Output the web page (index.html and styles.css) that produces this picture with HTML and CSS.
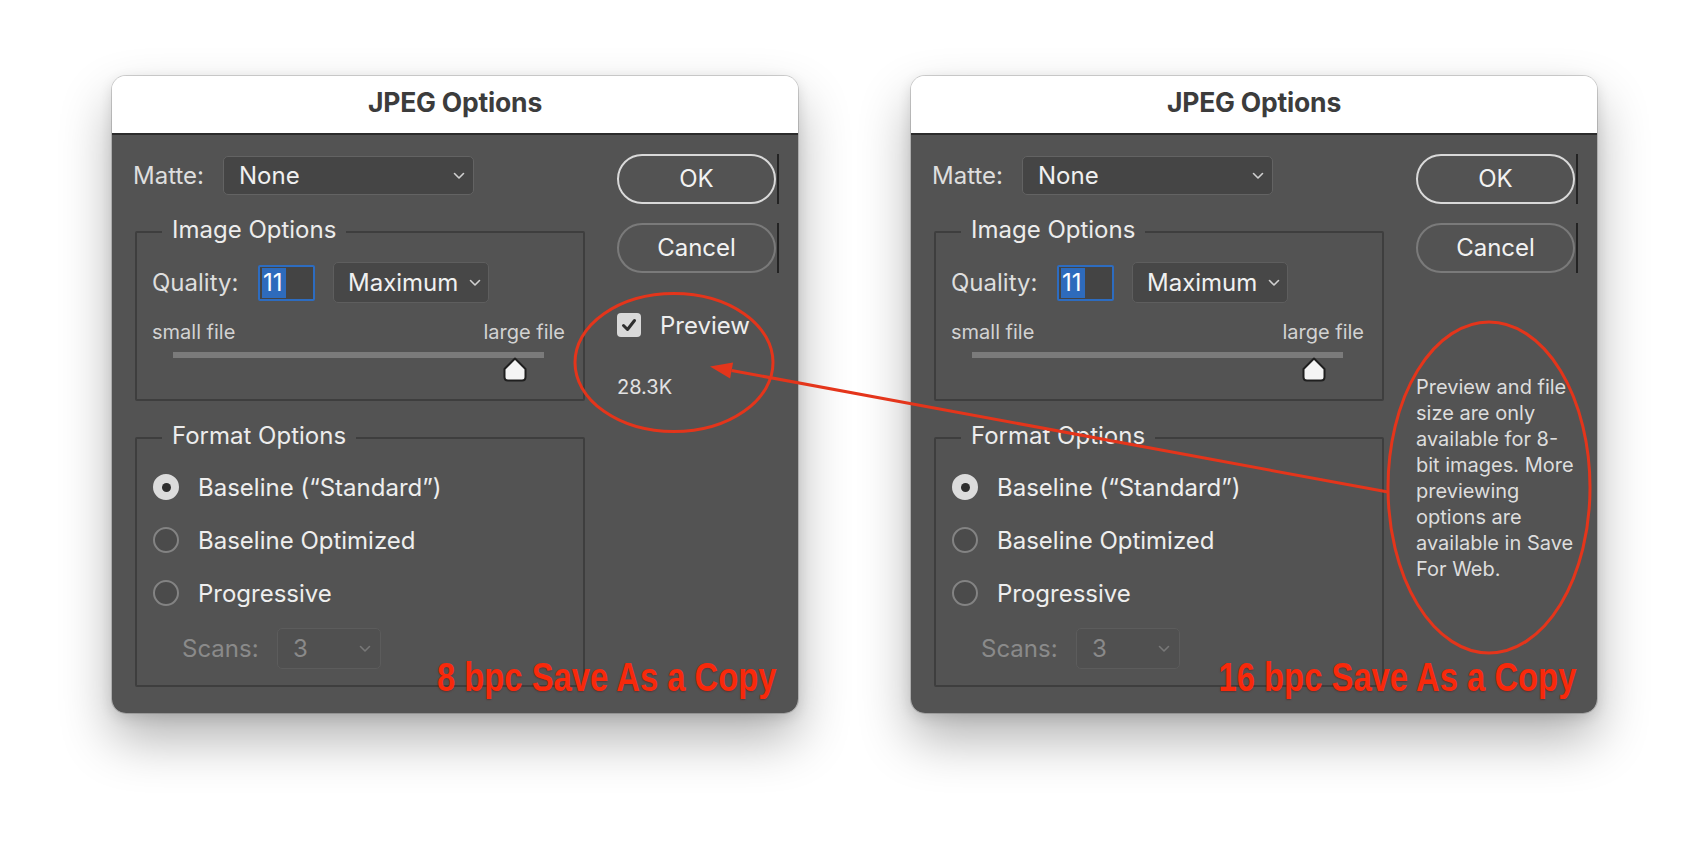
FILE: index.html
```html
<!DOCTYPE html>
<html lang="en">
<head>
<meta charset="utf-8">
<title>JPEG Options</title>
<link rel="stylesheet" href="styles.css">
</head>
<body>
<div class="stage">
  <div class="dialog">
    <div class="titlebar">JPEG Options</div>
    <div class="body">
      <div class="left">
        <div class="matte-row">
          <span class="label matte-label">Matte:</span>
          <div class="select matte-select"><span>None</span>
            <svg class="chev" width="12" height="8" viewBox="0 0 12 8"><polyline points="1.5,1.5 6,6 10.5,1.5"/></svg>
          </div>
        </div>
        <div class="group image-group">
          <div class="legend">Image Options</div>
          <div class="quality-row">
            <span class="label quality-label">Quality:</span>
            <div class="num-input"><span class="sel">11</span></div>
            <div class="select max-select"><span>Maximum</span>
              <svg class="chev" width="12" height="8" viewBox="0 0 12 8"><polyline points="1.5,1.5 6,6 10.5,1.5"/></svg>
            </div>
          </div>
          <div class="file-row"><span>small file</span><span>large file</span></div>
          <div class="slider">
            <div class="track"></div>
            <svg class="thumb" width="24" height="25" viewBox="0 0 24 25"><path d="M12 1.5 L22.5 12 L22.5 20 Q22.5 23.5 19 23.5 L5 23.5 Q1.5 23.5 1.5 20 L1.5 12 Z"/></svg>
          </div>
        </div>
        <div class="group format-group">
          <div class="legend">Format Options</div>
          <div class="radio-row first"><span class="radio on"></span><span class="rlabel">Baseline (“Standard”)</span></div>
          <div class="radio-row"><span class="radio"></span><span class="rlabel">Baseline Optimized</span></div>
          <div class="radio-row"><span class="radio"></span><span class="rlabel">Progressive</span></div>
          <div class="scans-row">
            <span class="label scans-label">Scans:</span>
            <div class="select scans-select"><span>3</span>
              <svg class="chev" width="12" height="8" viewBox="0 0 12 8"><polyline points="1.5,1.5 6,6 10.5,1.5"/></svg>
            </div>
          </div>
        </div>
      </div>
      <div class="right">
        <div class="btn-wrap"><div class="btn ok">OK</div></div>
        <div class="btn-wrap cancel-wrap"><div class="btn cancel">Cancel</div></div>
        <div class="preview-row">
          <span class="checkbox"><svg width="24" height="24" viewBox="0 0 24 24"><polyline points="6.5,12.5 10.5,16.5 17.5,7.5"/></svg></span>
          <span class="preview-label">Preview</span>
        </div>
        <div class="filesize">28.3K</div>
      </div>
      <div class="note">8 bpc Save As a Copy</div>
    </div>
  </div>

  <div class="dialog">
    <div class="titlebar">JPEG Options</div>
    <div class="body">
      <div class="left">
        <div class="matte-row">
          <span class="label matte-label">Matte:</span>
          <div class="select matte-select"><span>None</span>
            <svg class="chev" width="12" height="8" viewBox="0 0 12 8"><polyline points="1.5,1.5 6,6 10.5,1.5"/></svg>
          </div>
        </div>
        <div class="group image-group">
          <div class="legend">Image Options</div>
          <div class="quality-row">
            <span class="label quality-label">Quality:</span>
            <div class="num-input"><span class="sel">11</span></div>
            <div class="select max-select"><span>Maximum</span>
              <svg class="chev" width="12" height="8" viewBox="0 0 12 8"><polyline points="1.5,1.5 6,6 10.5,1.5"/></svg>
            </div>
          </div>
          <div class="file-row"><span>small file</span><span>large file</span></div>
          <div class="slider">
            <div class="track"></div>
            <svg class="thumb" width="24" height="25" viewBox="0 0 24 25"><path d="M12 1.5 L22.5 12 L22.5 20 Q22.5 23.5 19 23.5 L5 23.5 Q1.5 23.5 1.5 20 L1.5 12 Z"/></svg>
          </div>
        </div>
        <div class="group format-group">
          <div class="legend">Format Options</div>
          <div class="radio-row first"><span class="radio on"></span><span class="rlabel">Baseline (“Standard”)</span></div>
          <div class="radio-row"><span class="radio"></span><span class="rlabel">Baseline Optimized</span></div>
          <div class="radio-row"><span class="radio"></span><span class="rlabel">Progressive</span></div>
          <div class="scans-row">
            <span class="label scans-label">Scans:</span>
            <div class="select scans-select"><span>3</span>
              <svg class="chev" width="12" height="8" viewBox="0 0 12 8"><polyline points="1.5,1.5 6,6 10.5,1.5"/></svg>
            </div>
          </div>
        </div>
      </div>
      <div class="right">
        <div class="btn-wrap"><div class="btn ok">OK</div></div>
        <div class="btn-wrap cancel-wrap"><div class="btn cancel">Cancel</div></div>
        <div class="info">Preview and file<br>size are only<br>available for 8-<br>bit images. More<br>previewing<br>options are<br>available in Save<br>For Web.</div>
      </div>
      <div class="note">16 bpc Save As a Copy</div>
    </div>
  </div>

  <svg class="overlay" width="1707" height="862" viewBox="0 0 1707 862">
    <ellipse cx="674" cy="362.5" rx="99" ry="69"/>
    <ellipse cx="1489" cy="487.5" rx="101" ry="165.5"/>
    <line x1="1388" y1="492" x2="731.6" y2="370.5"/>
    <polygon class="head" points="710,366.5 733.1,362.6 730.1,378.4"/>
  </svg>
</div>
</body>
</html>
```

FILE: styles.css
```css
html, body {
  margin: 0;
  padding: 0;
  background: #ffffff;
}

.stage {
  position: relative;
  width: 1707px;
  height: 862px;
  box-sizing: border-box;
  padding: 76px 0 0 112px;
  display: flex;
  align-items: flex-start;
  gap: 113px;
  font-family: Inter, "Noto Sans", "Liberation Sans", sans-serif;
  overflow: hidden;
}

.dialog {
  width: 686px;
  height: 637px;
  border-radius: 14px;
  overflow: hidden;
  display: flex;
  flex-direction: column;
  box-shadow: 0 0 0 1px rgba(0,0,0,0.16), 0 26px 52px rgba(0,0,0,0.30), 0 4px 14px rgba(0,0,0,0.12);
}

.titlebar {
  height: 59px;
  flex: none;
  box-sizing: border-box;
  padding-bottom: 6px;
  background: #ffffff;
  border-bottom: 2px solid #2c2c2c;
  display: flex;
  align-items: center;
  justify-content: center;
  font-weight: 700;
  font-size: 26.5px;
  color: #3c3c3c;
  letter-spacing: -0.2px;
}

.body {
  position: relative;
  flex: 1;
  background: #535353;
  display: flex;
  padding: 19px 0 0 21px;
  color: #e9e9e9;
}

.left {
  width: 452px;
  display: flex;
  flex-direction: column;
}

.label {
  font-size: 24px;
  color: #dedede;
}

.matte-row {
  display: flex;
  align-items: center;
  height: 39px;
  margin-top: 2px;
}

.matte-label {
  width: 90px;
}

.select {
  box-sizing: border-box;
  display: flex;
  align-items: center;
  justify-content: space-between;
  background: #454545;
  border: 1.5px solid #636363;
  border-radius: 5px;
  font-size: 24px;
  color: #f0f0f0;
}

.chev polyline {
  fill: none;
  stroke: #d0d0d0;
  stroke-width: 1.6;
  stroke-linecap: round;
  stroke-linejoin: round;
}

.matte-select {
  width: 251px;
  height: 39px;
  padding: 0 8px 0 15px;
}

.group {
  box-sizing: border-box;
  width: 450px;
  margin-left: 2px;
  margin-top: 36px;
  border: 2px solid #3e3e3e;
  border-radius: 2px;
  display: flex;
  flex-direction: column;
}

.image-group { height: 170px; }
.format-group { height: 250px; }

.legend {
  align-self: flex-start;
  margin: -17px 0 2px 25px;
  padding: 0 10px;
  background: #535353;
  font-size: 24px;
  line-height: 28px;
  color: #ececec;
}

.quality-row {
  display: flex;
  align-items: center;
  margin: 16px 0 0 15px;
  height: 41px;
}

.quality-label { width: 106px; }

.num-input {
  box-sizing: border-box;
  width: 57px;
  height: 36px;
  margin-right: 18px;
  border: 2px solid #2d6cc0;
  border-radius: 2px;
  background: #444444;
  display: flex;
  align-items: center;
  padding-left: 2px;
}

.num-input .sel {
  background: #2e6bbc;
  color: #ffffff;
  font-size: 24px;
  line-height: 30px;
  padding: 0 3px 0 1px;
}

.max-select {
  width: 156px;
  height: 41px;
  padding: 0 7px 0 14px;
  background: #474747;
  border-color: #5e5e5e;
}

.file-row {
  display: flex;
  justify-content: space-between;
  margin: 17px 18px 0 15px;
  font-size: 20px;
  line-height: 24px;
  color: #d2d2d2;
}

.slider {
  margin: 8px 0 0 36px;
  width: 371px;
  display: flex;
  flex-direction: column;
}

.track {
  height: 6px;
  background: #7b7b7b;
}

.thumb {
  margin-left: 330px;
  margin-top: -1px;
}

.thumb path {
  fill: #f4f4f4;
  stroke: #1f1f1f;
  stroke-width: 2;
  stroke-linejoin: round;
}

.radio-row {
  display: flex;
  align-items: center;
  height: 30px;
  margin: 23px 0 0 16px;
}

.radio-row.first { margin-top: 20px; }

.radio {
  box-sizing: border-box;
  width: 26px;
  height: 26px;
  border-radius: 50%;
  background: #4b4b4b;
  border: 2px solid #838383;
  margin-right: 19px;
  display: flex;
  align-items: center;
  justify-content: center;
}

.radio.on {
  background: #dcdcdc;
  border-color: #dcdcdc;
}

.radio.on::after {
  content: "";
  width: 9px;
  height: 9px;
  border-radius: 50%;
  background: #2e2e2e;
}

.rlabel {
  font-size: 24px;
  color: #eeeeee;
}

.scans-row {
  display: flex;
  align-items: center;
  height: 41px;
  margin: 20px 0 0 45px;
}

.scans-label {
  width: 95px;
  color: #8a8a8a;
}

.scans-select {
  width: 104px;
  height: 41px;
  padding: 0 9px 0 15px;
  background: #505050;
  border-color: #5c5c5c;
  color: #8a8a8a;
}

.scans-select .chev polyline { stroke: #787878; }

.right {
  margin-left: 32px;
  width: 165px;
  display: flex;
  flex-direction: column;
}

.btn-wrap {
  display: flex;
  gap: 1px;
  height: 50px;
}

.btn-wrap::after {
  content: "";
  width: 2px;
  background: #232323;
}

.cancel-wrap { margin-top: 19px; }

.btn {
  box-sizing: border-box;
  width: 159px;
  height: 50px;
  border-radius: 25px;
  display: flex;
  align-items: center;
  justify-content: center;
  font-size: 24px;
  color: #f2f2f2;
  padding-bottom: 1px;
}

.btn.ok { border: 2px solid #d9d9d9; }
.btn.cancel { border: 2px solid #7a7a7a; }

.preview-row {
  display: flex;
  align-items: center;
  margin-top: 40px;
  height: 24px;
}

.checkbox {
  width: 24px;
  height: 24px;
  border-radius: 4px;
  background: #d9d9d9;
  margin-right: 19px;
  display: flex;
}

.checkbox polyline {
  fill: none;
  stroke: #2f2f2f;
  stroke-width: 3;
  stroke-linecap: round;
  stroke-linejoin: round;
}

.preview-label {
  font-size: 24px;
  color: #eeeeee;
}

.filesize {
  margin-top: 38px;
  font-size: 20px;
  line-height: 24px;
  color: #e2e2e2;
}

.info {
  margin-top: 101px;
  font-size: 20px;
  line-height: 26px;
  color: #dddddd;
  white-space: nowrap;
}

.note {
  position: absolute;
  right: 21px;
  bottom: 14px;
  font-family: "Liberation Sans", Arial, sans-serif;
  font-weight: 700;
  font-size: 41px;
  line-height: 44px;
  color: #f8290b;
  text-shadow: 0 1px 2px rgba(90,0,0,0.35);
  white-space: nowrap;
  transform: scaleX(0.8);
  transform-origin: right center;
}

.overlay {
  position: absolute;
  left: 0;
  top: 0;
  pointer-events: none;
}

.overlay ellipse,
.overlay line {
  fill: none;
  stroke: #e4351b;
  stroke-width: 3;
}

.overlay .head {
  fill: #e4351b;
}
```
